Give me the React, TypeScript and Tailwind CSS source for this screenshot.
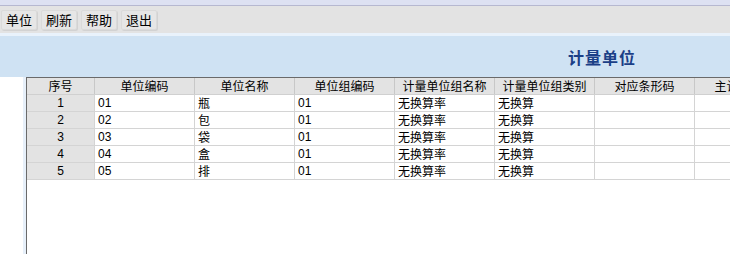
import React from 'react';

const columns = [
  { key: 'idx', label: '序号', width: 'w-[68px]' },
  { key: 'code', label: '单位编码', width: 'w-[100px]' },
  { key: 'name', label: '单位名称', width: 'w-[100px]' },
  { key: 'group', label: '单位组编码', width: 'w-[100px]' },
  { key: 'groupName', label: '计量单位组名称', width: 'w-[100px]' },
  { key: 'groupType', label: '计量单位组类别', width: 'w-[100px]' },
  { key: 'barcode', label: '对应条形码', width: 'w-[100px]' },
  { key: 'main', label: '主计量单位', width: 'w-[100px]' },
];

const rows = [
  { code: '01', name: '瓶' },
  { code: '02', name: '包' },
  { code: '03', name: '袋' },
  { code: '04', name: '盒' },
  { code: '05', name: '排' },
];

const toolbar = ['单位', '刷新', '帮助', '退出'];

const App: React.FC = () => {
  return (
    <div className="w-[730px] h-[254px] overflow-hidden bg-white text-black font-['Noto_Sans_CJK_SC','Noto_Sans',sans-serif] flex flex-col">
      {/* title strip */}
      <div className="h-[6px] bg-[#dde1f2] border-b border-[#b6b8d0] shrink-0" />

      {/* toolbar */}
      <div className="h-[27px] bg-[#e3e3e3] flex items-center gap-[4px] pl-[1px] shrink-0">
        {toolbar.map((t) => (
          <button
            key={t}
            className="h-[20px] px-[4px] bg-[#e6e6e6] border border-[#dadada] rounded-[2px] text-[13px] leading-none shadow-[1px_1px_0_#d2d2d2]"
          >
            {t}
          </button>
        ))}
      </div>

      {/* header band */}
      <div className="h-[44px] bg-[#cfe2f3] border-t-[3px] border-[#e9f2fb] flex items-center pl-[568px] shrink-0">
        <span className="text-[16px] font-bold text-[#1b3f87] tracking-[1px]">计量单位</span>
      </div>

      {/* body */}
      <div className="flex-1 flex min-h-0">
        <div className="w-[23px] shrink-0 bg-white" />
        <div className="w-[3px] shrink-0 bg-[#e7f0fa]" />
        <div className="flex-1 border-l border-t border-[#6a6a6a] overflow-hidden">
          <div className="flex h-[17px] bg-[#e3e3e3] border-b border-[#d0d0d0]">
            {columns.map((c) => (
              <div
                key={c.key}
                className={`${c.width} shrink-0 border-r border-[#c8c8c8] text-[12px] leading-[16px] text-center whitespace-nowrap overflow-hidden`}
              >
                {c.label}
              </div>
            ))}
          </div>
          {rows.map((r, i) => (
            <div key={r.code} className="flex h-[17px] border-b border-[#d4d4d4]">
              <div className="w-[68px] shrink-0 bg-[#e3e3e3] border-r border-[#d4d4d4] text-[12px] leading-[16px] text-center font-['Liberation_Sans',sans-serif]">
                {i + 1}
              </div>
              <div className="w-[100px] shrink-0 border-r border-[#d4d4d4] pl-[3px] text-[12px] leading-[16px] font-['Liberation_Sans',sans-serif]">
                {r.code}
              </div>
              <div className="w-[100px] shrink-0 border-r border-[#d4d4d4] pl-[3px] text-[12px] leading-[16px]">
                {r.name}
              </div>
              <div className="w-[100px] shrink-0 border-r border-[#d4d4d4] pl-[3px] text-[12px] leading-[16px] font-['Liberation_Sans',sans-serif]">
                01
              </div>
              <div className="w-[100px] shrink-0 border-r border-[#d4d4d4] pl-[3px] text-[12px] leading-[16px]">
                无换算率
              </div>
              <div className="w-[100px] shrink-0 border-r border-[#d4d4d4] pl-[3px] text-[12px] leading-[16px]">
                无换算
              </div>
              <div className="w-[100px] shrink-0 border-r border-[#d4d4d4]" />
              <div className="w-[100px] shrink-0 border-r border-[#d4d4d4]" />
            </div>
          ))}
        </div>
      </div>
    </div>
  );
};

export default App;
